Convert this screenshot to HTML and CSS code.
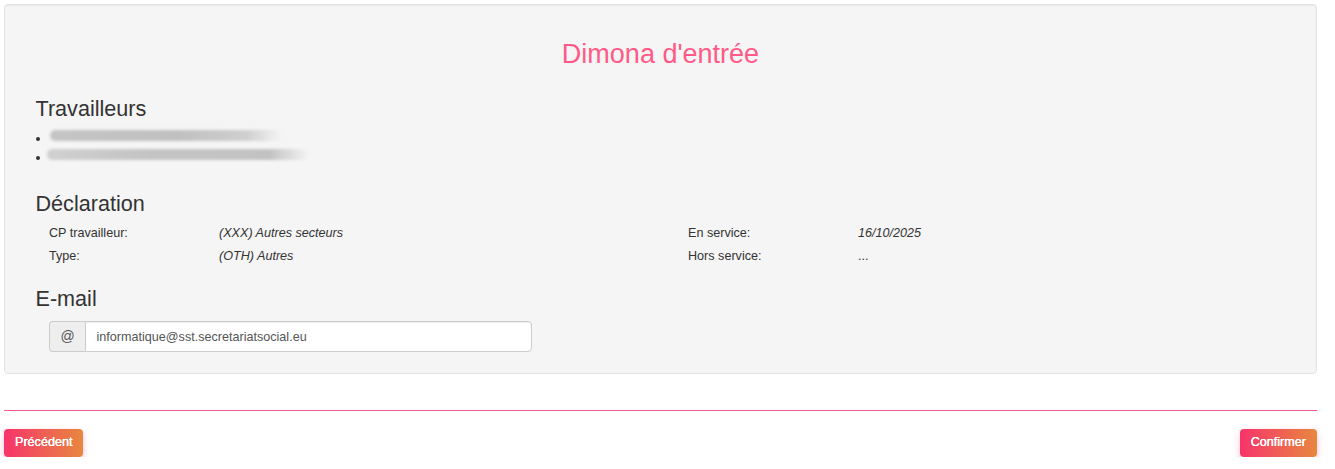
FILE: index.html
```html
<!DOCTYPE html>
<html lang="fr">
<head>
<meta charset="utf-8">
<title>Dimona d'entrée</title>
<link rel="stylesheet" href="styles.css">
</head>
<body>
<div class="page">
  <div class="well">
    <h2 class="title">Dimona d'entrée</h2>
    <div class="section">
      <h3 class="heading heading-first">Travailleurs</h3>
      <ul class="workers">
        <li class="worker"><span class="blur blur-1"></span></li>
        <li class="worker"><span class="blur blur-2"></span></li>
      </ul>
      <h3 class="heading heading-decl">Déclaration</h3>
      <div class="details">
        <div class="label">CP travailleur:</div>
        <div class="value">(XXX) Autres secteurs</div>
        <div class="label">En service:</div>
        <div class="value">16/10/2025</div>
        <div class="label">Type:</div>
        <div class="value">(OTH) Autres</div>
        <div class="label">Hors service:</div>
        <div class="value plain">...</div>
      </div>
      <h3 class="heading heading-mail">E-mail</h3>
      <div class="input-group">
        <span class="addon">@</span>
        <input class="input" type="text" value="informatique@sst.secretariatsocial.eu">
      </div>
    </div>
  </div>
  <hr class="rule">
  <div class="actions">
    <button class="btn" type="button">Précédent</button>
    <button class="btn" type="button">Confirmer</button>
  </div>
</div>
</body>
</html>
```

FILE: styles.css
```css
* { box-sizing: border-box; }
html, body { margin: 0; padding: 0; background: #fff; }
body {
  font-family: "Liberation Sans", Arial, Helvetica, sans-serif;
  font-size: 12.6px;
  line-height: 1.42857;
  color: #333;
}
.page {
  padding: 4px 18px 0 4px;
}
.well {
  background: #f5f5f5;
  border: 1px solid #e3e3e3;
  border-radius: 4px;
  box-shadow: inset 0 1px 1px rgba(0,0,0,0.05);
  padding: 17px 17px 21px 17px;
  height: 370px;
}
.title {
  margin: 18px 0 0 0;
  text-align: center;
  font-weight: normal;
  font-size: 27px;
  line-height: 29.7px;
  color: #ff5a87;
}
.section {
  padding: 0 13.5px;
}
.heading {
  font-weight: normal;
  font-size: 21.6px;
  line-height: 23.76px;
  margin: 0;
  color: #333;
}
.heading-first { margin-top: 27px; }
.heading-decl { margin-top: 26px; }
.heading-mail { margin-top: 22px; }
.workers {
  margin: 8px 0 0 0;
  padding: 0;
  list-style: none;
}
.worker {
  position: relative;
  height: 19px;
  padding-left: 11px;
  padding-top: 2px;
}
.worker::before {
  content: "";
  position: absolute;
  left: 0;
  top: 9px;
  width: 4px;
  height: 4px;
  border-radius: 50%;
  background: #333;
}
.blur {
  display: block;
  height: 11px;
  border-radius: 6px;
  filter: blur(1.8px);
}
.blur-1 {
  width: 232px;
  margin-left: 3px;
  background: linear-gradient(90deg, #c4c4c4 0%, #c0c0c0 55%, #cfcfcf 85%, rgba(235,235,235,0) 100%);
}
.blur-2 {
  width: 262px;
  background: linear-gradient(90deg, #d0d0d0 0%, #c3c3c3 40%, #c2c2c2 85%, rgba(230,230,230,0) 100%);
}
.details {
  display: grid;
  grid-template-columns: 170px 469px 170px 1fr;
  margin: 8px 0 0 13.5px;
  row-gap: 5px;
}
.details > div { line-height: 18px; }
.value { font-style: italic; }
.value.plain { font-style: normal; }
.input-group {
  display: flex;
  width: 483px;
  height: 31px;
  margin: 10px 0 0 13.5px;
}
.addon {
  width: 36px;
  display: flex;
  align-items: center;
  justify-content: center;
  background: #eee;
  border: 1px solid #ccc;
  border-right: 0;
  border-radius: 4px 0 0 4px;
  color: #555;
  font-size: 14px;
}
.input {
  flex: 1;
  min-width: 0;
  border: 1px solid #ccc;
  border-radius: 0 4px 4px 0;
  background: #fff;
  padding: 0 10.5px;
  font-family: inherit;
  font-size: 12.6px;
  color: #555;
  box-shadow: inset 0 1px 1px rgba(0,0,0,0.075);
  outline: none;
}
.rule {
  border: 0;
  border-top: 1px solid #ff5a87;
  margin: 36px 0 0 0;
  height: 0;
}
.actions {
  display: flex;
  justify-content: space-between;
  margin-top: 18px;
}
.btn {
  font-family: inherit;
  font-size: 12.6px;
  line-height: 1;
  color: #fff;
  border: 0;
  border-radius: 4px;
  height: 28px;
  padding: 0 11px 1px 11px;
  background: linear-gradient(90deg, #f7346b 0%, #e8873f 100%);
  box-shadow: 0 3px 7px rgba(247, 52, 107, 0.3);
  text-shadow: 0 0 0.6px #fff, 0 0 0.3px #fff;
  cursor: pointer;
}
```
